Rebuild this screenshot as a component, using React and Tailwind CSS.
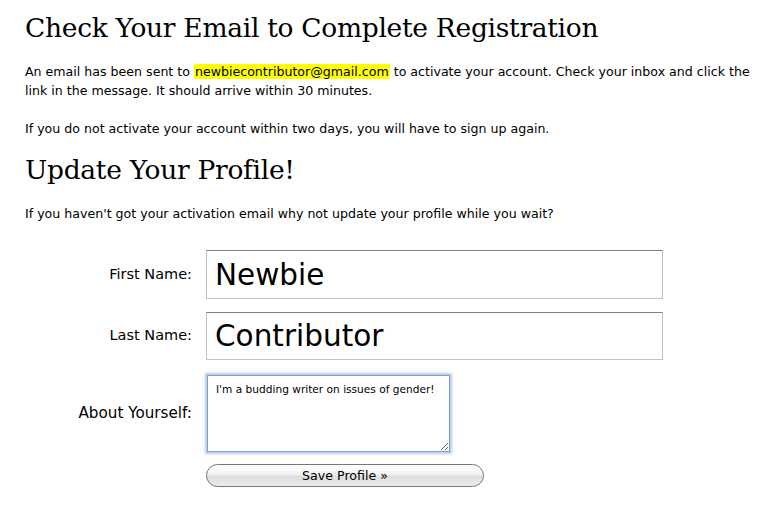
import React from "react";

const sans = { fontFamily: '"DejaVu Sans", "Lucida Grande", sans-serif' };

export default function App() {
  return (
    <div className="w-[769px] h-[507px] bg-white text-black pl-[25px] pr-[12px] overflow-hidden font-['DejaVu_Sans',sans-serif]">
      <h1 className="font-['DejaVu_Serif',Georgia,serif] text-[26.5px] leading-[34px] pt-[11px] tracking-[-0.3px]">
        Check Your Email to Complete Registration
      </h1>

      <p className="text-[12.6px] leading-[19px] mt-[17px]">
        An email has been sent to <span className="bg-[#ffff00] px-[1px]">newbiecontributor@gmail.com</span> to activate your account. Check your inbox and click the link in the message. It should arrive within 30 minutes.
      </p>
      <p className="text-[12.6px] leading-[19px] mt-[19px]">
        If you do not activate your account within two days, you will have to sign up again.
      </p>

      <h2 className="font-['DejaVu_Serif',Georgia,serif] text-[26.5px] leading-[34px] mt-[15px] tracking-[-0.3px]">
        Update Your Profile!
      </h2>
      <p className="text-[12.6px] leading-[19px] mt-[17px]">
        If you haven't got your activation email why not update your profile while you wait?
      </p>

      <form className="mt-[27px] flex flex-col" onSubmit={(e) => e.preventDefault()}>
        <div className="flex items-center">
          <label className="w-[167px] text-right text-[14.5px]">First Name:</label>
          <input
            defaultValue="Newbie"
            className="ml-[14px] w-[457px] h-[49px] px-[8px] text-[29.5px] border border-[#c2c2c2] border-t-[#808080] outline-none"
            style={sans}
          />
        </div>
        <div className="flex items-center mt-[13px]">
          <label className="w-[167px] text-right text-[14.5px]">Last Name:</label>
          <input
            defaultValue="Contributor"
            className="ml-[14px] w-[457px] h-[48px] px-[8px] text-[29.5px] border border-[#c2c2c2] border-t-[#808080] outline-none"
            style={sans}
          />
        </div>
        <div className="flex items-center mt-[15px]">
          <label className="w-[167px] text-right text-[15.2px]">About Yourself:</label>
          <textarea
            defaultValue="I'm a budding writer on issues of gender!"
            className="ml-[15px] w-[243px] h-[77px] px-[8px] py-[6px] text-[10.6px] leading-[14px] border border-[#7da2ce] shadow-[0_0_2px_2px_rgba(125,162,206,0.55)] outline-none resize"
            style={sans}
          />
        </div>
        <div className="flex mt-[12px]">
          <div className="w-[167px]" />
          <button
            type="submit"
            className="ml-[14px] w-[278px] h-[23px] rounded-full border border-[#777] bg-[linear-gradient(#ffffff,#f2f2f2_45%,#dedede_55%,#ececec)] text-[12.6px] leading-[20px] text-black"
          >
            Save Profile »
          </button>
        </div>
      </form>
    </div>
  );
}
